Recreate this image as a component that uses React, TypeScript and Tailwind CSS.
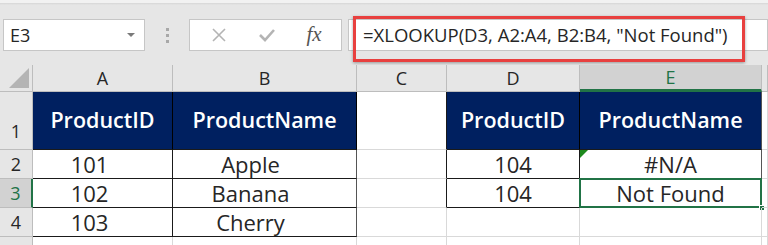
import React from 'react';

const font = { fontFamily: '"Open Sans", "Noto Sans", sans-serif' };

const cols = ['A', 'B', 'C', 'D', 'E'];

// one sheet cell, borders on right and bottom like Excel gridlines
const Cell: React.FC<{ className?: string; children?: React.ReactNode }> = ({ className = '', children }) => (
    <div className={`relative flex items-center justify-center border-r border-b ${className}`}>{children}</div>
);

export default function App() {
    return (
        <div className="w-[768px] h-[245px] overflow-hidden bg-[#e6e6e6] text-[#262626]" style={font}>
            {/* Formula bar */}
            <div className="relative h-[65px] border-t-[3px] border-[#f2f2f2]">
                <div className="h-[2px] bg-gradient-to-b from-[#d6d6d6] to-[#e6e6e6]" />
                <div className="flex items-start pt-[14px] pl-[3px] gap-0">
                    <div className="w-[142px] h-[32px] bg-white border border-[#c6c6c6] flex items-center justify-between pl-[6px] pr-[9px]">
                        <span className="text-[18px]">E3</span>
                        <span className="w-0 h-0 border-l-[4px] border-r-[4px] border-t-[4px] border-l-transparent border-r-transparent border-t-[#7a7a7a]" />
                    </div>
                    <div className="w-[44px] h-[32px] flex flex-col items-center justify-center gap-[3px]">
                        <span className="w-[3px] h-[3px] bg-[#a8a8a8]" />
                        <span className="w-[3px] h-[3px] bg-[#a8a8a8]" />
                        <span className="w-[3px] h-[3px] bg-[#a8a8a8]" />
                    </div>
                    <div className="w-[153px] h-[32px] bg-white border border-[#c6c6c6] flex items-center justify-around pl-[6px]">
                        <svg width="16" height="16" viewBox="0 0 16 16">
                            <path d="M2 2 L14 14 M14 2 L2 14" stroke="#b4b4b4" strokeWidth="1.6" />
                        </svg>
                        <svg width="18" height="16" viewBox="0 0 18 16">
                            <path d="M2 8 L7 13 L16 3" stroke="#b4b4b4" strokeWidth="2.6" fill="none" />
                        </svg>
                        <span className="text-[21px] italic text-[#555] pr-[4px]" style={{ fontFamily: '"Liberation Serif", serif' }}>
                            fx
                        </span>
                    </div>
                    <div className="ml-[6px] flex-1 h-[32px] bg-white border border-[#c6c6c6] flex items-center pl-[14px]">
                        <span className="text-[18.5px] whitespace-nowrap">=XLOOKUP(D3, A2:A4, B2:B4, "Not Found")</span>
                    </div>
                </div>
                {/* red highlight around formula */}
                <div className="absolute left-[353px] top-[13px] w-[392px] h-[46px] border-[3px] border-[#e8403f] shadow-[0_1px_3px_rgba(0,0,0,0.35)]" />
            </div>

            {/* Sheet grid */}
            <div className="grid grid-cols-[33px_140px_184px_90px_133px_182px_6px] grid-rows-[27px_58px_29px_29px_29px_20px] bg-white">
                {/* column headers */}
                <div className="relative bg-[#e6e6e6] border-r border-b border-[#bdbdbd]">
                    <svg className="absolute right-[3px] bottom-[3px]" width="20" height="20" viewBox="0 0 20 20">
                        <path d="M20 0 L20 20 L0 20 Z" fill="#b4b4b4" />
                    </svg>
                </div>
                {cols.map(c =>
                    c === 'E' ? (
                        <Cell key={c} className="bg-[#d2d2d2] border-r-[#bdbdbd] border-b-[3px] border-b-[#217346] text-[#217346] text-[18px]">
                            {c}
                        </Cell>
                    ) : (
                        <Cell key={c} className="bg-[#e6e6e6] border-[#bdbdbd] text-[18px]">
                            {c}
                        </Cell>
                    )
                )}
                <Cell className="bg-[#e6e6e6] border-[#bdbdbd]" />

                {/* row 1 */}
                <div className="bg-[#e6e6e6] border-r border-b border-[#bdbdbd] flex items-end justify-center pb-[4px] text-[18px]">1</div>
                <Cell className="bg-[#002060] border-r-black border-b-[#1a1a1a] text-white font-semibold text-[21.5px]">ProductID</Cell>
                <Cell className="bg-[#002060] border-r-black border-b-[#1a1a1a] text-white font-semibold text-[21.5px]">ProductName</Cell>
                <Cell className="border-r-[#1a1a1a] border-b-[#d9d9d9]" />
                <Cell className="bg-[#002060] border-r-black border-b-[#1a1a1a] text-white font-semibold text-[21.5px]">ProductID</Cell>
                <Cell className="bg-[#002060] border-r-[#555] border-b-[#1a1a1a] text-white font-semibold text-[21.5px]">ProductName</Cell>
                <Cell className="border-[#d9d9d9]" />

                {/* row 2 */}
                <div className="bg-[#e6e6e6] border-r border-b border-[#bdbdbd] flex items-center justify-center text-[18px]">2</div>
                <Cell className="border-[#1a1a1a] text-[22px] pr-[26px]">101</Cell>
                <Cell className="border-r-[#555] border-b-[#1a1a1a] text-[22px] pr-[28px]">Apple</Cell>
                <Cell className="border-r-[#1a1a1a] border-b-[#d9d9d9]" />
                <Cell className="border-[#1a1a1a] text-[22px]">104</Cell>
                <Cell className="border-r-[#555] border-b-[#1a1a1a] text-[22px]">
                    <span className="absolute left-0 top-0 w-0 h-0 border-t-[8px] border-r-[8px] border-t-[#1e8a1e] border-r-transparent" />
                    #N/A
                </Cell>
                <Cell className="border-[#d9d9d9]" />

                {/* row 3 */}
                <div className="bg-[#d2d2d2] border-r-[2px] border-r-[#217346] border-b border-b-[#bdbdbd] flex items-center justify-center text-[18px] text-[#217346]">3</div>
                <Cell className="border-[#1a1a1a] text-[22px] pr-[26px]">102</Cell>
                <Cell className="border-r-[#555] border-b-[#1a1a1a] text-[22px] pr-[28px]">Banana</Cell>
                <Cell className="border-r-[#1a1a1a] border-b-[#d9d9d9]" />
                <Cell className="border-[#1a1a1a] text-[22px]">104</Cell>
                <Cell className="border-r-[#d9d9d9] border-b-[#d9d9d9] text-[22px]">
                    Not Found
                    <span className="absolute -left-[1px] -top-[1px] -right-[1px] -bottom-[1px] border-2 border-[#217346]" />
                    <span className="absolute -right-[4px] -bottom-[4px] w-[6px] h-[6px] bg-[#217346] border border-white" />
                </Cell>
                <Cell className="border-[#d9d9d9]" />

                {/* row 4 */}
                <div className="bg-[#e6e6e6] border-r border-b border-[#bdbdbd] flex items-center justify-center text-[18px]">4</div>
                <Cell className="border-[#1a1a1a] text-[22px] pr-[26px]">103</Cell>
                <Cell className="border-r-[#555] border-b-[#1a1a1a] text-[22px] pr-[28px]">Cherry</Cell>
                <Cell className="border-[#d9d9d9]" />
                <Cell className="border-[#d9d9d9]" />
                <Cell className="border-[#d9d9d9]" />
                <Cell className="border-[#d9d9d9]" />

                {/* row 5 */}
                <div className="bg-[#e6e6e6] border-r border-[#bdbdbd]" />
                <Cell className="border-[#d9d9d9]" />
                <Cell className="border-[#d9d9d9]" />
                <Cell className="border-[#d9d9d9]" />
                <Cell className="border-[#d9d9d9]" />
                <Cell className="border-[#d9d9d9]" />
                <Cell className="border-[#d9d9d9]" />
            </div>
        </div>
    );
}
